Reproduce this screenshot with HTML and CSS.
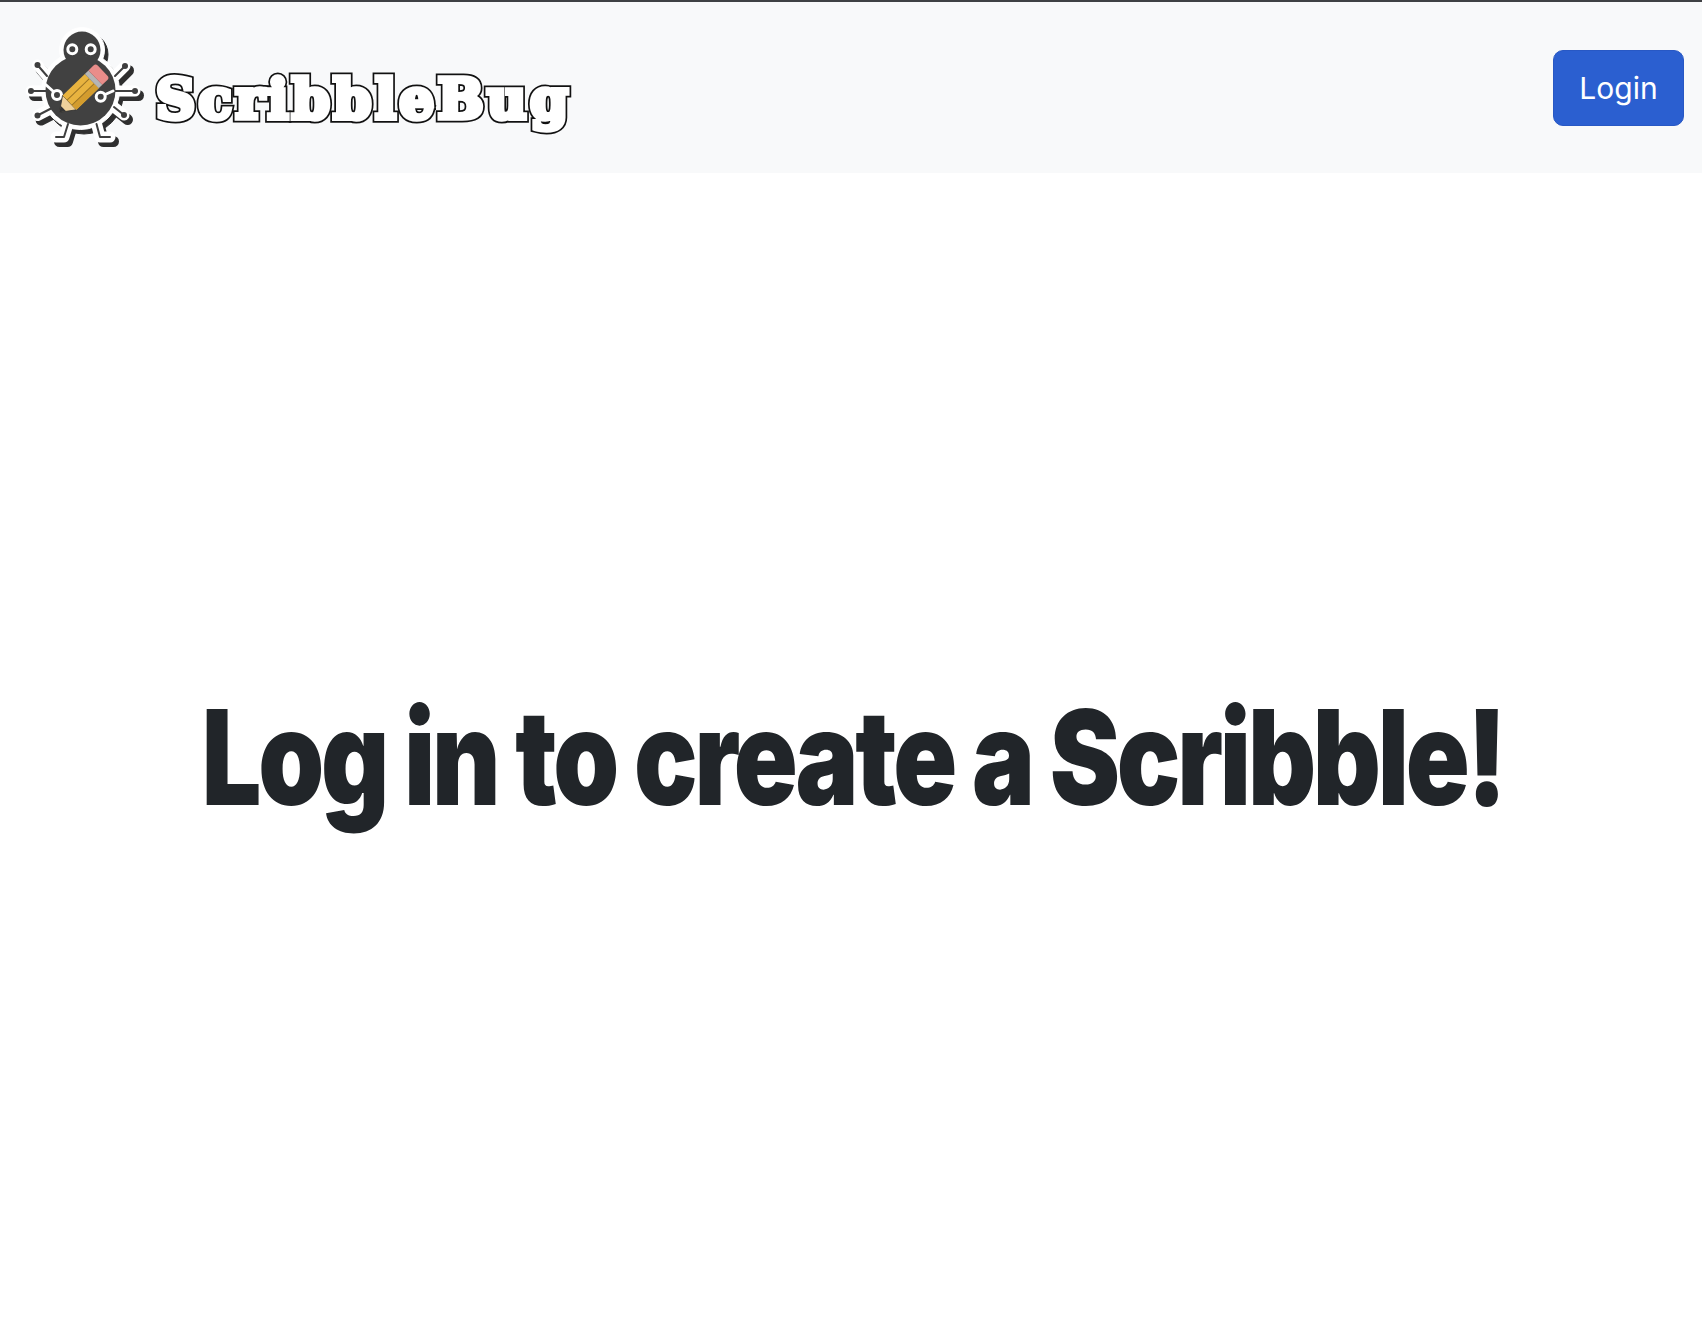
FILE: index.html
```html
<!DOCTYPE html>
<html lang="en">
<head>
    <meta charset="UTF-8">
    <meta name="viewport" content="width=device-width, initial-scale=1.0">
    <title>ScribbleBug</title>
    <link rel="stylesheet" href="styles.css">
</head>
<body>

<nav class="navbar">
    <a class="brand" href="#">
        <svg class="brand-logo" viewBox="20 25 130 130" width="130" height="130" aria-hidden="true">
            <defs>
                <g id="bugLegs" fill="none" stroke-linecap="round" stroke-linejoin="round">
                    <path d="M37.5 65 L47 76"/>
                    <path d="M125 66 L115 76"/>
                    <path d="M31 91 L50 91"/>
                    <path d="M135 91 L112 91"/>
                    <path d="M37.5 115.5 L52 108"/>
                    <path d="M124 115 L114 107"/>
                    <path d="M56 137 L64 137 L68 124"/>
                    <path d="M110 137 L100 137 L96.5 124"/>
                </g>
                <g id="bugShape">
                    <use href="#bugLegs" stroke-width="11"/>
                    <circle cx="82" cy="50" r="22.5"/>
                    <circle cx="80.5" cy="90.5" r="39"/>
                </g>
            </defs>
            <!-- shadow and white sticker edge -->
            <use href="#bugShape" transform="translate(3.5 4.5)" fill="#2f2f2f" stroke="#2f2f2f"/>
            <use href="#bugShape" fill="#ffffff" stroke="#ffffff"/>
            <!-- legs -->
            <use href="#bugLegs" stroke="#3f3f3f" stroke-width="2"/>
            <circle cx="37.5" cy="65" r="3" fill="#3f3f3f"/>
            <circle cx="125" cy="66" r="3" fill="#3f3f3f"/>
            <circle cx="31" cy="91" r="3" fill="#3f3f3f"/>
            <circle cx="135" cy="91" r="3" fill="#3f3f3f"/>
            <circle cx="37.5" cy="115.5" r="3" fill="#3f3f3f"/>
            <circle cx="124" cy="115" r="3" fill="#3f3f3f"/>
            <!-- head and body -->
            <circle cx="82" cy="50" r="18.5" fill="#414141"/>
            <path d="M64 64 Q81 51 98 64" fill="none" stroke="#ffffff" stroke-width="3"/>
            <circle cx="80.5" cy="90.5" r="35" fill="#414141"/>
            <circle cx="72.3" cy="49.3" r="4.5" fill="#414141" stroke="#ffffff" stroke-width="3"/>
            <circle cx="90.7" cy="49.3" r="4.5" fill="#414141" stroke="#ffffff" stroke-width="3"/>
            <!-- inner joints -->
            <path d="M45 84 L54 92" stroke="#ffffff" stroke-width="3" stroke-linecap="round"/>
            <circle cx="57" cy="95" r="4.5" fill="#414141" stroke="#ffffff" stroke-width="3"/>
            <path d="M104 95 L113 91" stroke="#ffffff" stroke-width="3" stroke-linecap="round"/>
            <circle cx="100.7" cy="96.7" r="4.5" fill="#414141" stroke="#ffffff" stroke-width="3"/>
            <!-- pencil -->
            <g transform="rotate(-44 81 91.5)">
                <path d="M51 91.5 L65 81.5 L65 101.5 Z" fill="#efd19b" stroke="#333333" stroke-width="0.8"/>
                <path d="M51 91.5 L56.5 87.6 L56.5 95.4 Z" fill="#333333"/>
                <rect x="65" y="81.5" width="31" height="20" fill="#e8b33f"/>
                <rect x="65" y="95" width="31" height="6.5" fill="#d39c2e"/>
                <path d="M65 88 H96 M65 95 H96" stroke="#9c7526" stroke-width="1"/>
                <rect x="96" y="81.5" width="5" height="20" fill="#b5b5b5"/>
                <path d="M101 81.5 H108 Q111 81.5 111 84.5 V98.5 Q111 101.5 108 101.5 H101 Z" fill="#e98d8a"/>
            </g>
        </svg>
        <span class="brand-name" data-text="ScribbleBug">ScribbleBug</span>
    </a>
    <button class="login-btn" type="button">Login</button>
</nav>

<main class="content">
    <h1 class="prompt">Log in to create a Scribble!</h1>
</main>

</body>
</html>
```
FILE: styles.css
```css
html, body {
    height: 100%;
}
body {
    margin: 0;
    background-color: #fff;
    color: #212529;
    font-family: Inter, "Noto Sans", sans-serif;
    display: flex;
    flex-direction: column;
    overflow: hidden;
}

.navbar {
    display: flex;
    align-items: center;
    justify-content: space-between;
    height: 171px;
    padding: 0 18px 0 20px;
    background-color: #f8f9fa;
    border-top: 2px solid #3f4144;
}
.brand {
    display: flex;
    align-items: center;
    text-decoration: none;
}
.brand-logo {
    display: block;
    flex-shrink: 0;
    margin-top: 5px;
}
/* the outlined word is two stacked copies: a fat black one, a thinner white one on top */
.brand-name {
    position: relative;
    margin: 22px 0 0 6px;
    font-family: "DejaVu Serif", serif;
    font-weight: 700;
    font-size: 54px;
    line-height: 1;
    letter-spacing: 3.8px;
    color: #111;
    -webkit-text-stroke: 9px #111;
}
.brand-name::after {
    content: attr(data-text);
    position: absolute;
    left: 0;
    top: 0;
    color: #fff;
    -webkit-text-stroke: 5.5px #fff;
}

.login-btn {
    width: 131px;
    height: 76px;
    padding: 0;
    background-color: #2b5fd0;
    color: #fff;
    border: 1px solid #2858c4;
    border-radius: 10px;
    font-family: Inter, sans-serif;
    font-size: 30px;
    cursor: pointer;
}

.content {
    flex: 1;
    display: flex;
    justify-content: center;
    padding-top: 505px;
}
.prompt {
    margin: 0 0 0 4px;
    font-size: 132px;
    font-weight: 900;
    line-height: 1.2;
    letter-spacing: -4px;
    white-space: nowrap;
    transform: scaleX(0.8);
}
```
